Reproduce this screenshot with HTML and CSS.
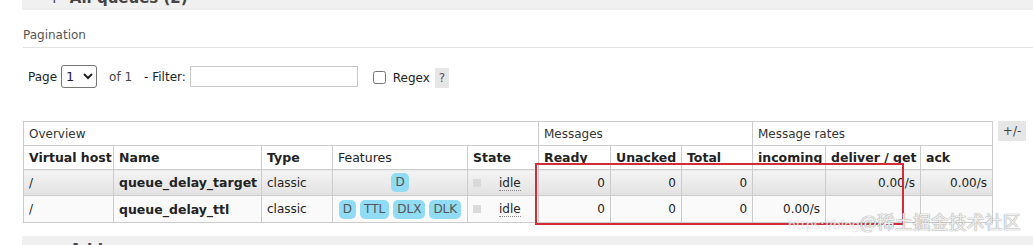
FILE: index.html
```html
<!DOCTYPE html>
<html lang="en">
<head>
    <meta charset="UTF-8">
    <title>Queues</title>
    <link rel="stylesheet" href="styles.css">
</head>
<body>
    <div class="section-bar top-bar"><span class="toggle">+</span> All queues (2)</div>

    <div class="content">
        <h3 class="pagination-title">Pagination</h3>
        <div class="pager">
            <span>Page</span>
            <select class="page-select"><option>1</option></select>
            <span class="of">of 1</span>
            <span>- Filter:</span>
            <input type="text" class="filter-input">
            <label class="regex"><input type="checkbox"> Regex</label>
            <span class="help">?</span>
        </div>

        <div class="table-wrap">
            <table class="queues">
                <colgroup>
                    <col style="width:90px"><col style="width:148px"><col style="width:71px">
                    <col style="width:135px"><col style="width:71px"><col style="width:72px">
                    <col style="width:71px"><col style="width:71px"><col style="width:73px">
                    <col style="width:95px"><col style="width:72px">
                </colgroup>
                <thead>
                    <tr class="group-row">
                        <th colspan="5">Overview</th>
                        <th colspan="3">Messages</th>
                        <th colspan="3">Message rates</th>
                    </tr>
                    <tr class="col-row">
                        <th>Virtual host</th>
                        <th>Name</th>
                        <th>Type</th>
                        <th class="plain">Features</th>
                        <th>State</th>
                        <th>Ready</th>
                        <th>Unacked</th>
                        <th>Total</th>
                        <th>incoming</th>
                        <th>deliver / get</th>
                        <th>ack</th>
                    </tr>
                </thead>
                <tbody>
                    <tr class="alt1">
                        <td>/</td>
                        <td class="name">queue_delay_target</td>
                        <td>classic</td>
                        <td class="features"><abbr>D</abbr></td>
                        <td><span class="state-box"></span><span class="state">idle</span></td>
                        <td class="num">0</td>
                        <td class="num">0</td>
                        <td class="num">0</td>
                        <td class="num"></td>
                        <td class="num">0.00/s</td>
                        <td class="num">0.00/s</td>
                    </tr>
                    <tr class="alt2">
                        <td>/</td>
                        <td class="name">queue_delay_ttl</td>
                        <td>classic</td>
                        <td class="features"><abbr>D</abbr><abbr>TTL</abbr><abbr>DLX</abbr><abbr>DLK</abbr></td>
                        <td><span class="state-box"></span><span class="state">idle</span></td>
                        <td class="num">0</td>
                        <td class="num">0</td>
                        <td class="num">0</td>
                        <td class="num">0.00/s</td>
                        <td class="num"></td>
                        <td class="num"></td>
                    </tr>
                </tbody>
            </table>
            <span class="columns-toggle">+/-</span>
        </div>
    </div>

    <div class="section-bar bottom-bar"><span class="toggle">+</span> Add a new queue</div>

    <!-- annotation overlay from the screenshot -->
    <div class="highlight"></div>
    <div class="watermark"><span class="wm-url">https://blog</span>@稀土掘金技术社区</div>
</body>
</html>
```

FILE: styles.css
```css
body {
    font-family: "DejaVu Sans", Verdana, sans-serif;
    font-size: 12px;
    color: #484848;
    margin: 0;
    padding: 0;
    background-color: #fff;
    height: 245px;
    overflow: hidden;
    position: relative;
}
.section-bar {
    margin-left: 22px;
    background-color: #f0f0f0;
    font-weight: bold;
    font-size: 15px;
    color: #444;
    padding: 0 0 0 26px;
    line-height: 24px;
}
.top-bar {
    margin-top: -14px;
}
.bottom-bar {
    margin-top: 13px;
    padding-top: 2px;
    height: 24px;
}
.toggle {
    font-weight: normal;
    margin-right: 4px;
}
.content {
    padding-left: 23px;
}
.pagination-title {
    margin: 0;
    padding-top: 18px;
    padding-bottom: 5px;
    font-size: 12px;
    font-weight: normal;
    color: #555;
    border-bottom: 1px solid #e2e2e2;
}
.pager {
    display: flex;
    align-items: center;
    padding: 17px 0 0 5px;
    color: #222;
    height: 23px;
}
.page-select {
    font-family: "DejaVu Sans", Verdana, sans-serif;
    font-size: 13px;
    width: 36px;
    height: 23px;
    margin-left: 4px;
    border: 1px solid #767676;
    border-radius: 3px;
    background: #fff;
    color: #222;
}
.of {
    margin-left: 12px;
    margin-right: 12px;
    color: #444;
}
.filter-input {
    width: 168px;
    height: 21px;
    box-sizing: border-box;
    margin-left: 4px;
    border: 1px solid #c8c8c8;
}
.regex {
    display: flex;
    align-items: center;
    margin-left: 15px;
    margin-top: 2px;
}
.regex input {
    width: 13px;
    height: 13px;
    margin: 0 7px 0 0;
}
.help {
    background-color: #e6e6e6;
    width: 14px;
    height: 20px;
    line-height: 20px;
    text-align: center;
    margin-left: 5px;
    margin-top: 2px;
    color: #555;
}
.table-wrap {
    display: flex;
    align-items: flex-start;
    gap: 5px;
    margin-top: 33px;
}
.queues {
    border-collapse: collapse;
    table-layout: fixed;
    width: 970px;
}
.queues th,
.queues td {
    border: 1px solid #ccc;
    padding: 0 5px;
    text-align: left;
    white-space: nowrap;
    overflow: hidden;
    color: #222;
}
.group-row th {
    font-weight: normal;
    height: 23px;
    color: #333;
}
.col-row th {
    height: 23px;
    font-size: 12.5px;
}
.col-row th.plain {
    font-weight: normal;
}
tbody td {
    height: 25px;
    color: #555;
}
tbody tr.alt1 td {
    background: linear-gradient(#f4f4f4, #e2e2e2);
}
tbody tr.alt2 td {
    background-color: #fafafa;
    height: 26px;
}
td.name {
    font-weight: bold;
    color: #222;
    font-size: 12.5px;
}
td.num {
    text-align: right;
}
td.features {
    text-align: center;
    padding: 0 2px;
}
abbr {
    display: inline-block;
    background-color: #8fdcf4;
    color: #555;
    border-radius: 5px;
    padding: 2px 4px;
    margin: 0 2px;
    line-height: 15px;
}
.state-box {
    display: inline-block;
    width: 8px;
    height: 8px;
    background-color: #dadada;
    margin-right: 18px;
}
.state {
    border-bottom: 1px dotted #888;
}
.columns-toggle {
    background-color: #e6e6e6;
    width: 28px;
    height: 20px;
    line-height: 20px;
    text-align: center;
    color: #444;
}
.highlight {
    position: absolute;
    left: 535px;
    top: 163px;
    width: 365px;
    height: 58px;
    border: 2px solid #d22c36;
}
.watermark {
    position: absolute;
    left: 788px;
    top: 208px;
    font-family: "Noto Sans CJK SC", sans-serif;
    font-size: 18px;
    line-height: 26px;
    color: rgba(255, 255, 255, 0.85);
    text-shadow: 0 0 1px #999, 0 0 1px #999;
    white-space: nowrap;
}
.wm-url {
    font-family: "DejaVu Sans", sans-serif;
    font-size: 12.5px;
    color: rgba(255, 255, 255, 0.6);
    text-shadow: 0 0 1px #ccc;
}
```
